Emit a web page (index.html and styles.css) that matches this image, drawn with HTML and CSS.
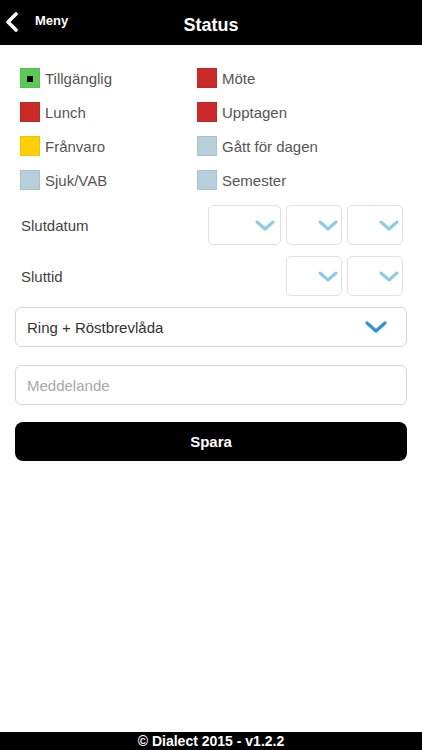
FILE: index.html
```html
<!DOCTYPE html>
<html>
	<head>
		<meta name="viewport" content="width=device-width, initial-scale=1">
		<meta charset="UTF-8">
		<title>Status</title>
		<link rel="stylesheet" href="styles.css">
	</head>
	<body>
		<div class="page">
			<div class="header">
				<a class="back">
					<svg width="14" height="20" viewBox="0 0 14 20"><path d="M11 2 L3 10 L11 18" fill="none" stroke="#fff" stroke-width="3.6" stroke-linecap="round" stroke-linejoin="round"/></svg>
					<span>Meny</span>
				</a>
				<h1>Status</h1>
			</div>

			<div class="statuses">
				<div class="status"><span class="swatch green"><i></i></span>Tillgänglig</div>
				<div class="status"><span class="swatch red"></span>Möte</div>
				<div class="status"><span class="swatch red"></span>Lunch</div>
				<div class="status"><span class="swatch red"></span>Upptagen</div>
				<div class="status"><span class="swatch yellow"></span>Frånvaro</div>
				<div class="status"><span class="swatch blue"></span>Gått för dagen</div>
				<div class="status"><span class="swatch blue"></span>Sjuk/VAB</div>
				<div class="status"><span class="swatch blue"></span>Semester</div>
			</div>

			<div class="field-row date-row">
				<span class="label">Slutdatum</span>
				<div class="pickers">
					<div class="picker wide"><svg width="20" height="11" viewBox="0 0 20 11"><path d="M2 2 L10 9 L18 2" fill="none" stroke="#8ccae6" stroke-width="3" stroke-linecap="round" stroke-linejoin="round"/></svg></div>
					<div class="picker"><svg width="20" height="11" viewBox="0 0 20 11"><path d="M2 2 L10 9 L18 2" fill="none" stroke="#8ccae6" stroke-width="3" stroke-linecap="round" stroke-linejoin="round"/></svg></div>
					<div class="picker"><svg width="20" height="11" viewBox="0 0 20 11"><path d="M2 2 L10 9 L18 2" fill="none" stroke="#8ccae6" stroke-width="3" stroke-linecap="round" stroke-linejoin="round"/></svg></div>
				</div>
			</div>

			<div class="field-row time-row">
				<span class="label">Sluttid</span>
				<div class="pickers">
					<div class="picker"><svg width="20" height="11" viewBox="0 0 20 11"><path d="M2 2 L10 9 L18 2" fill="none" stroke="#8ccae6" stroke-width="3" stroke-linecap="round" stroke-linejoin="round"/></svg></div>
					<div class="picker"><svg width="20" height="11" viewBox="0 0 20 11"><path d="M2 2 L10 9 L18 2" fill="none" stroke="#8ccae6" stroke-width="3" stroke-linecap="round" stroke-linejoin="round"/></svg></div>
				</div>
			</div>

			<div class="select">
				<span>Ring + Röstbrevlåda</span>
				<svg width="22" height="12" viewBox="0 0 22 12"><path d="M2 2 L11 10 L20 2" fill="none" stroke="#2b94d6" stroke-width="3.2" stroke-linecap="round" stroke-linejoin="round"/></svg>
			</div>

			<div class="input">Meddelande</div>

			<button class="save">Spara</button>

			<div class="footer">© Dialect 2015 - v1.2.2</div>
		</div>
	</body>
</html>
```

FILE: styles.css
```css
* {
	box-sizing: border-box;
	padding: 0;
	margin: 0;
	font-family: 'Liberation Sans', Arial, sans-serif;
}
body, html {
	height: 100%;
	background: #fff;
}
.page {
	display: flex;
	flex-direction: column;
	height: 750px;
}
.header {
	background: #000;
	color: #fff;
	height: 45px;
	display: flex;
	align-items: center;
	justify-content: center;
	position: relative;
}
.header h1 {
	font-size: 18px;
	font-weight: bold;
	padding-top: 5px;
}
.back {
	position: absolute;
	left: 5px;
	top: 12px;
	display: flex;
	align-items: center;
	gap: 16px;
	color: #fff;
	font-size: 13px;
	font-weight: bold;
}
.back span {
	margin-top: -3px;
}
.statuses {
	display: grid;
	grid-template-columns: 177px 1fr;
	row-gap: 14px;
	padding: 23px 0 0 20px;
}
.status {
	display: flex;
	align-items: center;
	gap: 5px;
	font-size: 15px;
	color: #555;
	height: 20px;
}
.swatch {
	width: 20px;
	height: 20px;
	display: flex;
	align-items: center;
	justify-content: center;
	border: 1px solid rgba(0, 0, 0, 0.06);
}
.swatch i {
	width: 6px;
	height: 6px;
	background: #000;
	margin-top: 1px;
}
.green { background: #5bca55; }
.red { background: #cc2a28; }
.yellow { background: #fdcf06; }
.blue { background: #b7cfdb; }

.field-row {
	display: flex;
	align-items: center;
	justify-content: space-between;
	padding: 0 19px 0 21px;
}
.date-row {
	margin-top: 15px;
}
.time-row {
	margin-top: 11px;
}
.label {
	font-size: 15px;
	color: #444;
}
.pickers {
	display: flex;
	gap: 5px;
}
.picker {
	width: 56px;
	height: 40px;
	border: 1px solid #e2e2e2;
	border-radius: 5px;
	display: flex;
	align-items: center;
	justify-content: flex-end;
	padding-right: 3px;
}
.picker.wide {
	width: 73px;
	padding-right: 5px;
}
.select, .input {
	margin: 0 15px;
	height: 40px;
	border: 1px solid #d6d6d6;
	border-radius: 6px;
	display: flex;
	align-items: center;
	padding: 0 19px 0 11px;
	font-size: 15px;
}
.select {
	margin-top: 11px;
	justify-content: space-between;
	color: #333;
}
.input {
	margin-top: 18px;
	color: #a8a8a8;
}
.save {
	margin: 17px 15px 0;
	height: 39px;
	background: #000;
	color: #fff;
	border: none;
	border-radius: 8px;
	font-size: 15px;
	font-weight: bold;
}
.footer {
	margin-top: auto;
	background: #000;
	color: #fff;
	height: 18px;
	text-align: center;
	font-size: 14px;
	font-weight: bold;
	line-height: 19px;
}
```
